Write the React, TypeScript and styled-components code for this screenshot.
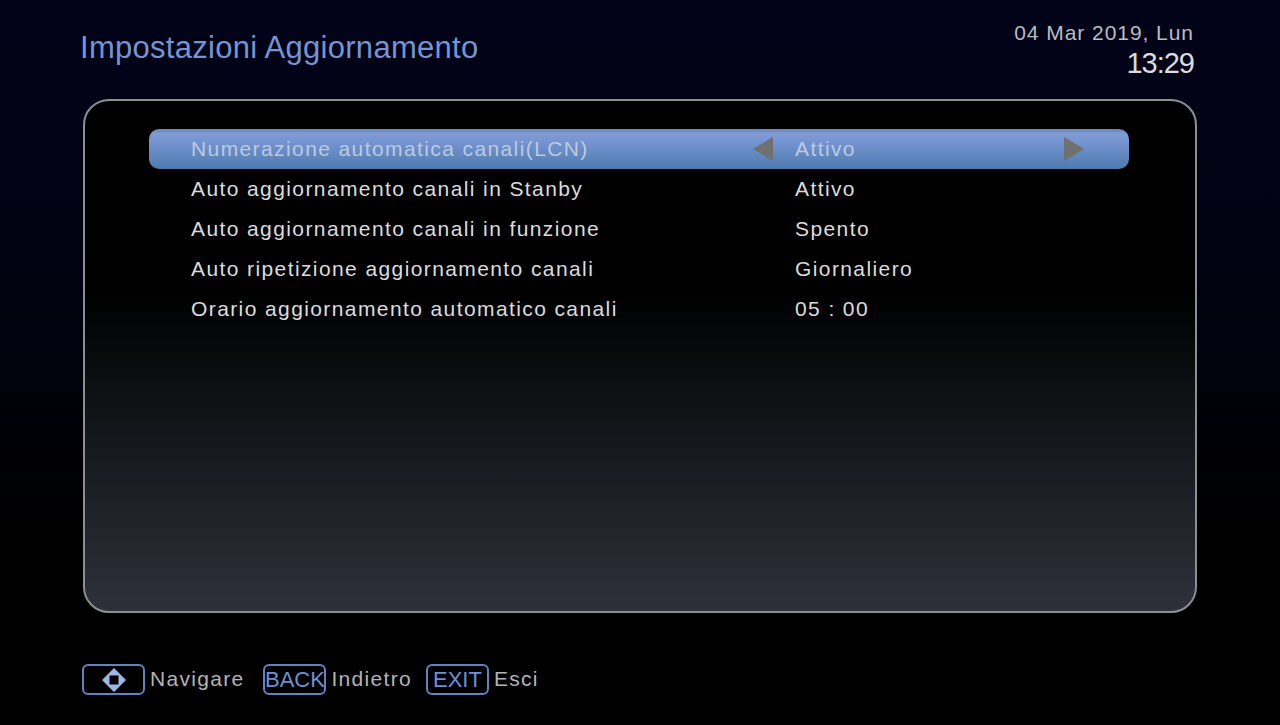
import React from "react";
import styled, { createGlobalStyle } from "styled-components";

const GlobalStyle = createGlobalStyle`
  html, body {
    margin: 0;
    padding: 0;
    background: #000;
  }
`;

const Screen = styled.div`
  width: 1280px;
  height: 725px;
  overflow: hidden;
  display: flex;
  flex-direction: column;
  font-family: "Liberation Sans", Arial, sans-serif;
  background: linear-gradient(180deg, #020318 0%, #020316 20%, #01020e 45%, #000 75%, #000 100%);
`;

const Header = styled.div`
  height: 99px;
  box-sizing: border-box;
  padding: 0 86px 0 80px;
  display: flex;
  justify-content: space-between;
`;

const Title = styled.h1`
  margin: 28px 0 0;
  font-size: 31px;
  line-height: 40px;
  font-weight: normal;
  letter-spacing: 0.28px;
  color: #7595d2;
`;

const Clock = styled.div`
  padding-top: 21px;
  text-align: right;
`;

const DateText = styled.div`
  font-size: 21px;
  line-height: 24px;
  letter-spacing: 0.95px;
  color: #bcbcc0;
`;

const TimeText = styled.div`
  margin-top: 2px;
  font-size: 29px;
  line-height: 32px;
  letter-spacing: -1px;
  color: #dcdcdc;
`;

const Panel = styled.div`
  width: 1114px;
  height: 514px;
  margin-left: 83px;
  box-sizing: border-box;
  padding: 28px 66px 0 64px;
  border: 2px solid #8e8e92;
  border-radius: 26px;
  background: linear-gradient(180deg, #000 0%, #000 37%, #1b1f25 76%, #2e3139 100%);
`;

const Row = styled.div<{ $selected?: boolean }>`
  height: 40px;
  display: flex;
  align-items: center;
  border-radius: 10px;
  font-size: 21px;
  letter-spacing: 1.4px;
  color: ${(p) => (p.$selected ? "#bccae0" : "#dcdcdc")};
  background: ${(p) =>
    p.$selected
      ? "linear-gradient(180deg, #6a83b4 0%, #809bd6 12%, #7393d0 35%, #5f86bd 70%, #4f7aae 100%)"
      : "transparent"};
`;

const Label = styled.span`
  width: 604px;
  padding-left: 42px;
  box-sizing: border-box;
`;

const ArrowSlot = styled.span`
  width: 42px;
  display: flex;
  align-items: center;
`;

const Value = styled.span`
  width: 269px;
`;

const Footer = styled.div`
  margin: 51px 0 0 82px;
  display: flex;
  align-items: center;
`;

const KeyHint = styled.div<{ $after?: number }>`
  display: flex;
  align-items: center;
  margin-right: ${(p) => p.$after ?? 0}px;
  gap: 5px;
`;

const KeyCap = styled.div`
  width: 63px;
  height: 31px;
  box-sizing: border-box;
  border: 2px solid #6482bc;
  border-radius: 6px;
  display: flex;
  align-items: center;
  justify-content: center;
  font-size: 22px;
  color: #6f90d6;
`;

const HintText = styled.span`
  padding-bottom: 2px;
  font-size: 21px;
  letter-spacing: 1.3px;
  color: #b4b4b4;
`;

const rows = [
  { label: "Numerazione automatica canali(LCN)", value: "Attivo", selected: true },
  { label: "Auto aggiornamento canali in Stanby", value: "Attivo" },
  { label: "Auto aggiornamento canali in funzione", value: "Spento" },
  { label: "Auto ripetizione aggiornamento canali", value: "Giornaliero" },
  { label: "Orario aggiornamento automatico canali", value: "05 : 00" },
];

function Arrow({ right }: { right?: boolean }) {
  return (
    <svg width="20" height="24" viewBox="0 0 20 24">
      <polygon points={right ? "0,0 20,12 0,24" : "20,0 0,12 20,24"} fill="#70706e" />
    </svg>
  );
}

function NavIcon() {
  return (
    <svg width="24" height="24" viewBox="0 0 24 24">
      <path fillRule="evenodd" d="M12 0 24 12 12 24 0 12ZM7.5 7.5V16.5H16.5V7.5Z" fill="#9db6e6" />
    </svg>
  );
}

export default function App() {
  return (
    <Screen>
      <GlobalStyle />
      <Header>
        <Title>Impostazioni Aggiornamento</Title>
        <Clock>
          <DateText>04 Mar 2019, Lun</DateText>
          <TimeText>13:29</TimeText>
        </Clock>
      </Header>
      <Panel>
        {rows.map((row) => (
          <Row key={row.label} $selected={row.selected}>
            <Label>{row.label}</Label>
            <ArrowSlot>{row.selected && <Arrow />}</ArrowSlot>
            <Value>{row.value}</Value>
            {row.selected && <Arrow right />}
          </Row>
        ))}
      </Panel>
      <Footer>
        <KeyHint $after={19}>
          <KeyCap>
            <NavIcon />
          </KeyCap>
          <HintText>Navigare</HintText>
        </KeyHint>
        <KeyHint $after={14}>
          <KeyCap>BACK</KeyCap>
          <HintText>Indietro</HintText>
        </KeyHint>
        <KeyHint>
          <KeyCap>EXIT</KeyCap>
          <HintText>Esci</HintText>
        </KeyHint>
      </Footer>
    </Screen>
  );
}
